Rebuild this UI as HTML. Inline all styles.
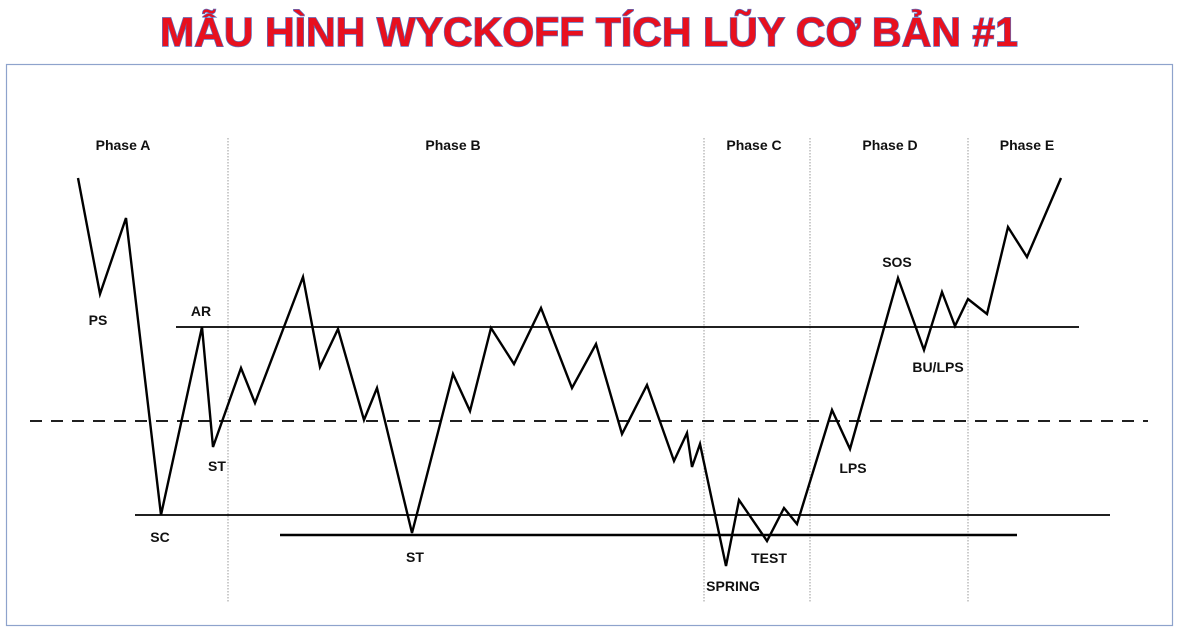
<!DOCTYPE html>
<html><head><meta charset="utf-8"><style>
html,body{margin:0;padding:0;background:#fff;width:1179px;height:631px;overflow:hidden}
svg{display:block}
</style></head><body>
<svg width="1179" height="631" viewBox="0 0 1179 631" xmlns="http://www.w3.org/2000/svg">
<rect x="0" y="0" width="1179" height="631" fill="#fff"/>
<text x="589" y="46" text-anchor="middle" font-family="Liberation Sans, sans-serif" font-weight="bold" font-size="41" fill="#e8101e" stroke="#5a6fc0" stroke-width="1.4" paint-order="stroke" textLength="858" lengthAdjust="spacingAndGlyphs">MẪU HÌNH WYCKOFF TÍCH LŨY CƠ BẢN #1</text>
<rect x="6.5" y="64.5" width="1166" height="561" fill="#fff" stroke="#8ea3cc" stroke-width="1.2"/>
<g stroke="#999" stroke-width="1" stroke-dasharray="1.5,1.5">
<line x1="228" y1="138" x2="228" y2="603"/>
<line x1="704" y1="138" x2="704" y2="603"/>
<line x1="810" y1="138" x2="810" y2="603"/>
<line x1="968" y1="138" x2="968" y2="603"/>
</g>
<g stroke="#000" fill="none">
<line x1="176" y1="327" x2="1079" y2="327" stroke-width="1.8"/>
<line x1="30" y1="421" x2="1148" y2="421" stroke-width="1.8" stroke-dasharray="12,9"/>
<line x1="135" y1="515" x2="1110" y2="515" stroke-width="1.8"/>
<line x1="280" y1="535" x2="1017" y2="535" stroke-width="2.4"/>
<polyline stroke-width="2.4" stroke-linejoin="miter" points="78,178 100,294 126,218 161,515 202,327 213,447 241,368 255,403 303,277 320,367 338,329 364,420 377,388 412,533 453,374 470,411 491,328 514,364 541,308 572,388 596,344 622,434 647,385 674,461 687,433 692,467 700,444 726,566 739,500 767,541 784,508 797,524 832,410 850,449 898,278 924,350 942,292 955,326 968,299 987,314 1008,227 1027,257 1061,178"/>
</g>
<g font-family="Liberation Sans, DejaVu Sans, sans-serif" font-size="14" font-weight="bold" fill="#111" text-anchor="middle">
<text x="123" y="150">Phase A</text>
<text x="453" y="150">Phase B</text>
<text x="754" y="150">Phase C</text>
<text x="890" y="150">Phase D</text>
<text x="1027" y="150">Phase E</text>
<text x="98" y="325">PS</text>
<text x="201" y="316">AR</text>
<text x="217" y="471">ST</text>
<text x="160" y="542">SC</text>
<text x="415" y="562">ST</text>
<text x="733" y="591">SPRING</text>
<text x="769" y="563">TEST</text>
<text x="853" y="473">LPS</text>
<text x="897" y="267">SOS</text>
<text x="938" y="372">BU/LPS</text>
</g>
</svg>
</body></html>
